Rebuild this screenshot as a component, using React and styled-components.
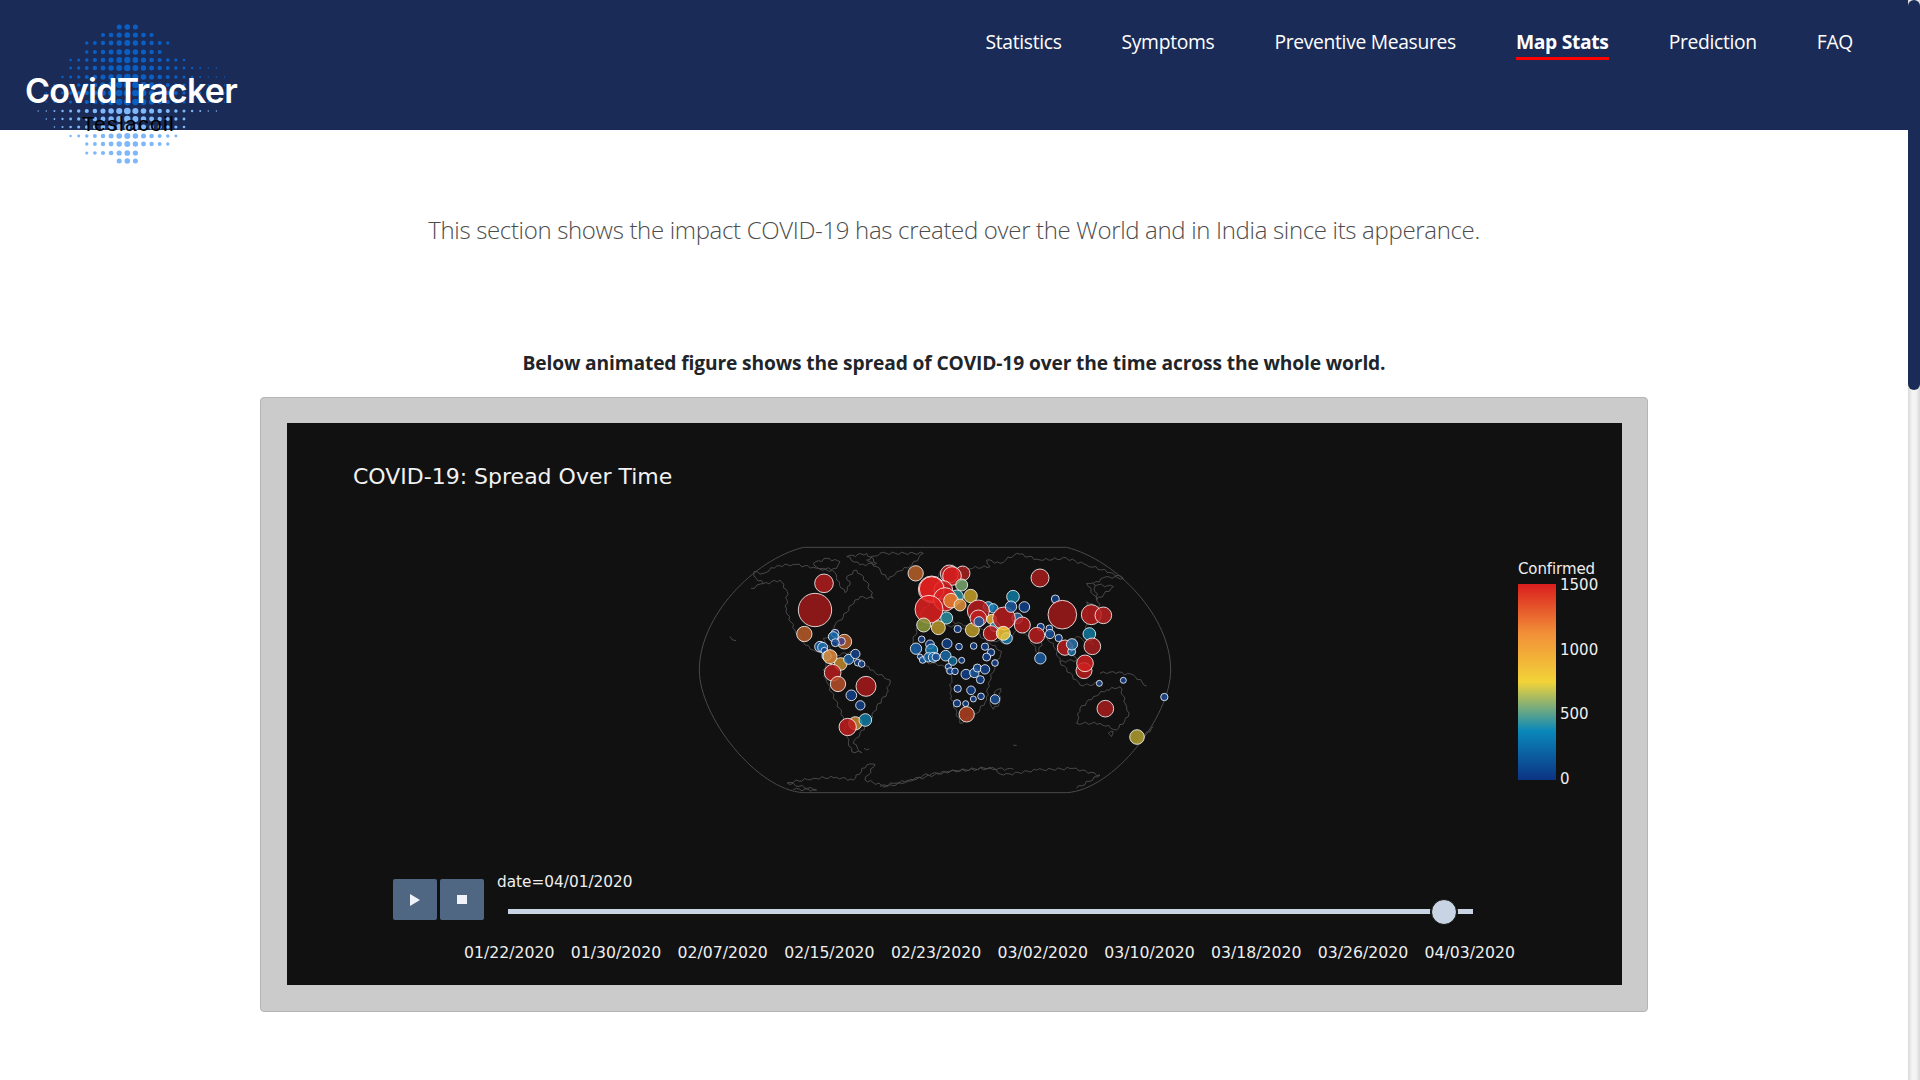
import * as React from "react";
import styled, { createGlobalStyle } from "styled-components";

const GlobalStyle = createGlobalStyle`
  html, body {
    margin: 0;
    padding: 0;
    height: 100%;
    overflow: hidden;
    background: #fff;
  }
`;

const Page = styled.div`
  display: flex;
  width: 1920px;
  height: 1080px;
  overflow: hidden;
`;

const Main = styled.main`
  flex: 1;
  min-width: 0;
  font-family: "Open Sans", sans-serif;
`;

const ScrollRail = styled.div`
  width: 12px;
  background: linear-gradient(to right, #d8d8d8, #f4f4f4 35%, #f4f4f4 65%, #d8d8d8);
`;

const ScrollThumb = styled.div`
  height: 390px;
  background: #1a2b58;
  border-radius: 6px;
`;

const Header = styled.header`
  display: flex;
  justify-content: space-between;
  align-items: flex-start;
  height: 130px;
  padding-right: 55px;
  background: #1a2b58;
`;

const Logo = styled.div`
  position: relative;
  width: 300px;
  height: 130px;
  padding: 69px 0 0 25px;
  box-sizing: border-box;
`;

const LogoDots = styled.svg`
  position: absolute;
  left: 0;
  top: 0;
`;

const LogoName = styled.div`
  position: relative;
  font-family: Inter, sans-serif;
  font-size: 34px;
  font-weight: 600;
  line-height: 44px;
  letter-spacing: -0.7px;
  color: #fff;
`;

const LogoTag = styled.div`
  position: absolute;
  left: 82px;
  top: 112px;
  font-family: "Liberation Sans", sans-serif;
  font-size: 21px;
  line-height: 24px;
  letter-spacing: 1.4px;
  color: #000;
`;

const Nav = styled.nav`
  display: flex;
  gap: 60px;
  padding-top: 27px;
`;

const NavLink = styled.a`
  display: block;
  height: 30px;
  font-size: 19.3px;
  line-height: 29px;
  letter-spacing: -0.32px;
  color: #fff;
  font-weight: ${({ $active }) => ($active ? 700 : 400)};
  border-bottom: 3px solid ${({ $active }) => ($active ? "#f00" : "transparent")};
`;

const Intro = styled.p`
  margin: 83px 0 102px;
  text-align: center;
  font-size: 24px;
  font-weight: 300;
  line-height: 34px;
  letter-spacing: -0.33px;
  color: #4d4d4d;
`;

const Caption = styled.h2`
  margin: 0 0 20px;
  text-align: center;
  font-size: 19.2px;
  font-weight: 700;
  line-height: 28px;
  letter-spacing: -0.13px;
  color: #212529;
`;

const FigureCard = styled.div`
  width: 1388px;
  height: 615px;
  margin: 0 auto;
  padding: 25px 25px 25px 26px;
  box-sizing: border-box;
  background: #cbcbcb;
  border: 1px solid #b5b5b5;
  border-radius: 4px;
`;

const Plot = styled.div`
  display: flex;
  flex-direction: column;
  width: 1335px;
  height: 562px;
  background: #111;
  color: #eee;
  font-family: "DejaVu Sans", sans-serif;
`;

const PlotTitle = styled.div`
  height: 107px;
  padding: 38px 0 0 66px;
  box-sizing: border-box;
  font-size: 22px;
  line-height: 32px;
  color: #f2f2f2;
`;

const PlotBody = styled.div`
  display: flex;
  align-items: flex-start;
  height: 349px;
`;

const MapSvg = styled.svg`
  flex: none;
  margin-left: 393px;
`;

const ColorBar = styled.div`
  margin: 31px 0 0 318px;
`;

const ColorBarTitle = styled.div`
  font-size: 15px;
  line-height: 16px;
  margin-bottom: 7px;
  letter-spacing: -0.1px;
`;

const ColorBarBody = styled.div`
  display: flex;
  gap: 4px;
`;

const ColorBarRamp = styled.div`
  width: 38px;
  height: 196px;
  background: linear-gradient(to top, #0c3383, #0a88ba 25%, #f2d338 50%, #f28f38 75%, #d91e1e);
`;

const ColorBarTicks = styled.div`
  display: flex;
  flex-direction: column;
  justify-content: space-between;
  height: 210px;
  margin-top: -7px;
  font-size: 15px;
  line-height: 16px;
`;

const Controls = styled.div`
  display: flex;
  align-items: flex-start;
  padding-left: 106px;
`;

const PlayButton = styled.div`
  display: flex;
  align-items: center;
  justify-content: center;
  width: 44px;
  height: 41px;
  margin-right: 3px;
  background: #506784;
  border-radius: 2px;
`;

const SliderColumn = styled.div`
  margin: -7px 0 0 10px;
`;

const SliderLabel = styled.div`
  font-size: 15.3px;
  line-height: 20px;
`;

const SliderRail = styled.div`
  position: relative;
  width: 965px;
  height: 5px;
  margin: 17px 0 0 11px;
  background: #c8d4e3;
`;

const SliderHandle = styled.div`
  position: absolute;
  top: 50%;
  width: 24px;
  height: 24px;
  transform: translate(-50%, -50%);
  background: #c8d4e3;
  border: 1px solid #111;
  box-shadow: 0 0 0 1px #111;
  border-radius: 50%;
`;

const SliderTicks = styled.div`
  display: flex;
  justify-content: space-between;
  width: 1051px;
  margin: 23px 0 0 177px;
  font-size: 15.7px;
  line-height: 20px;
`;

const N = "#123f8a";

// bubbles west of the Atlantic: x, y, r, fill (in 3x map units)
const bubblesWest = [
  [432, 160, 28, "#b01c1c"], [405, 240, 50, "#a01a1a"], [373, 312, 23, "#b85c28"],
  [465, 310, 12, N], [460, 320, 15, "#1a6aa8"], [493, 335, 22, "#b8602a"],
  [484, 334, 12, "#4a3f8a"], [466, 338, 12, "#174a96"], [420, 350, 16, "#1a5aa0"],
  [428, 352, 15, "#1c6cac"], [433, 362, 10, N], [440, 378, 14, "#0f7aa8"],
  [482, 402, 19, "#c08a2c"], [450, 380, 21, "#e08a38"], [506, 388, 15, "#1a62a5"],
  [526, 372, 14, N], [533, 398, 10, N], [545, 402, 10, N],
  [458, 428, 25, "#b81c1c"], [474, 462, 23, "#b8502a"], [558, 469, 30, "#a81a1a"],
  [514, 496, 16, N], [541, 526, 14, N], [526, 580, 20, "#c88a30"],
  [556, 570, 19, "#0f7aa0"], [503, 591, 26, "#c01c1c"],
];

// bubbles east of it, measured from a map origin 600 units further right
const bubblesEast = [
  [107, 130, 23, "#b8602a"], [248, 130, 22, "#a82020"], [208, 132, 27, "#b81c1c"],
  [216, 138, 28, "#d82020"], [245, 165, 18, "#7aa870"], [155, 178, 40, "#c81c1c"],
  [190, 180, 28, "#d02020"], [155, 177, 37, "#e02020"], [230, 200, 20, "#2a8ea0"],
  [272, 198, 20, "#c8a028"], [195, 208, 35, "#d82020"], [213, 212, 22, "#e08030"],
  [240, 225, 18, "#e0903a"], [147, 238, 42, "#e02020"], [200, 264, 18, "#2a8ea0"],
  [131, 285, 21, "#8a9a3c"], [175, 293, 21, "#b8962a"], [233, 297, 11, N],
  [277, 300, 21, "#b89a28"], [325, 230, 15, "#1a7ab0"], [340, 235, 14, "#1a7ab0"],
  [295, 243, 33, "#b81c1c"], [295, 265, 25, "#c02020"], [297, 275, 15, "#1a5aa0"],
  [335, 268, 15, "#e8b030"], [345, 290, 15, "#20809a"], [333, 310, 23, "#c01c1c"],
  [412, 265, 16, "#2a6aa0"], [372, 265, 34, "#b81c1c"], [380, 325, 17, "#1a7aa8"],
  [370, 310, 21, "#f2c838"], [399, 200, 19, "#0f7aa0"], [393, 230, 17, "#1a5aa0"],
  [433, 231, 16, N], [427, 285, 24, "#b81c1c"], [480, 144, 27, "#a81c1c"],
  [526, 207, 12, N], [547, 254, 43, "#a01a1a"], [634, 254, 30, "#b81c1c"],
  [670, 256, 25, "#b82020"], [628, 312, 19, "#0f7aa0"], [637, 349, 25, "#a81c1c"],
  [555, 353, 23, "#b81c1c"], [575, 365, 12, "#1a6aa0"], [576, 343, 17, "#2a70a8"],
  [482, 291, 11, N], [508, 295, 10, N], [510, 312, 14, "#1a5098"],
  [536, 324, 11, N], [470, 316, 24, "#b81c1c"], [481, 385, 17, "#1a5aa0"],
  [612, 422, 24, "#b81c1c"], [615, 400, 25, "#d02020"], [658, 460, 9, "#1d4a90"],
  [730, 451, 9, N], [853, 501, 11, "#1d4a90"], [676, 536, 25, "#a81c1c"],
  [771, 621, 22, "#b0a030"], [125, 328, 10, N], [150, 343, 13, N],
  [201, 341, 15, N], [237, 350, 10, N], [281, 348, 10, N],
  [315, 350, 11, N], [108, 356, 17, "#1a62a8"], [155, 360, 18, "#1a7ab0"],
  [120, 380, 8, N], [128, 390, 10, "#1a5aa0"], [145, 382, 14, "#1a6aa8"],
  [160, 382, 15, "#1a6aa8"], [168, 381, 12, "#1a5098"], [197, 377, 16, "#1a6aa8"],
  [218, 393, 13, "#106a9a"], [245, 391, 9, N], [333, 367, 11, N],
  [320, 381, 12, N], [345, 399, 10, N], [205, 410, 9, N],
  [210, 423, 10, N], [225, 424, 10, N], [258, 433, 15, N],
  [283, 429, 14, "#1a5aa0"], [292, 414, 12, "#1a5098"], [315, 418, 14, N],
  [301, 449, 12, N], [233, 476, 11, N], [273, 481, 13, N],
  [303, 499, 10, N], [280, 507, 9, N], [345, 508, 14, "#1a5098"],
  [231, 520, 11, N], [257, 521, 9, N], [260, 553, 23, "#b04020"],
];

const coastsWest = [
  [[213, 175], [250, 160], [228, 145], [222, 125], [250, 130], [290, 108], [340, 103], [400, 112], [430, 115], [465, 128], [470, 150], [495, 188], [510, 165], [500, 140], [530, 120], [560, 155], [580, 205], [540, 200], [515, 225], [490, 260], [465, 285], [462, 305], [445, 322], [430, 325], [440, 345], [470, 375], [445, 385], [410, 365], [375, 345], [345, 300], [318, 245], [322, 185], [300, 150], [250, 162]],
  [[445, 385], [470, 375], [520, 365], [570, 420], [630, 450], [620, 490], [590, 530], [570, 570], [540, 610], [520, 640], [545, 668], [515, 665], [500, 620], [490, 560], [440, 455], [430, 420], [445, 385]],
  [[625, 150], [590, 110], [560, 90], [600, 70], [730, 70], [690, 110], [650, 125], [625, 150]],
  [[400, 100], [440, 85], [480, 95], [470, 115], [420, 118], [400, 100]],
  [[500, 80], [560, 70], [590, 100], [540, 105], [500, 80]],
  [[150, 320], [168, 332]],
  [[322, 758], [400, 745], [470, 742], [520, 750], [560, 705], [585, 703], [555, 750], [620, 770], [700, 750], [800, 725], [930, 715], [1000, 718]],
  [[322, 760], [410, 780], [340, 778]],
  [[552, 655], [568, 657]],
];

const coastsEast = [
  [[100, 330], [115, 290], [180, 285], [240, 290], [290, 310], [330, 340], [365, 365], [345, 410], [325, 460], [320, 510], [290, 550], [240, 580], [210, 490], [215, 440], [185, 405], [130, 395], [105, 360], [100, 330]],
  [[350, 480], [362, 475], [358, 520], [340, 538], [330, 520], [350, 480]],
  [[120, 250], [165, 205], [150, 165], [200, 105], [260, 115], [330, 110], [320, 90], [360, 100], [410, 70], [480, 90], [560, 85], [620, 105], [700, 130], [730, 145], [680, 140], [640, 160], [650, 200], [660, 240], [620, 215], [620, 300], [640, 345], [590, 320], [575, 360], [590, 390], [540, 395], [520, 340], [490, 320], [475, 370], [445, 320], [410, 300], [385, 340], [330, 330], [295, 280], [270, 290], [200, 270], [130, 270], [120, 250]],
  [[540, 395], [600, 465], [640, 465], [660, 450]],
  [[660, 430], [700, 425], [760, 435], [800, 468]],
  [[620, 160], [700, 170], [650, 210], [620, 160]],
  [[600, 535], [640, 500], [680, 480], [720, 470], [740, 530], [745, 560], [710, 600], [660, 580], [590, 580], [600, 535]],
  [[685, 610], [700, 605], [695, 620], [685, 610]],
  [[770, 640], [820, 590]],
  [[400, 645], [410, 647]],
  [[0, 770], [40, 760], [100, 750], [130, 735], [230, 722], [330, 712], [370, 735], [470, 720], [580, 715], [660, 735], [590, 775]],
];

// break each straight run into short wobbling ones so it reads as a coast
function coastPath(points) {
  let d = `M${points[0][0]},${points[0][1]}`;
  for (let i = 1; i < points.length; i++) {
    const [ax, ay] = points[i - 1];
    const [bx, by] = points[i];
    const len = Math.hypot(bx - ax, by - ay);
    const steps = Math.max(1, Math.round(len / 9));
    for (let s = 1; s <= steps; s++) {
      const t = s / steps;
      const wobble = s === steps ? 0 : Math.sin(ax * 0.7 + ay * 1.3 + s * 2.1) * 4;
      const x = ax + (bx - ax) * t + (-(by - ay) / (len || 1)) * wobble;
      const y = ay + (by - ay) * t + ((bx - ax) / (len || 1)) * wobble;
      d += `L${x.toFixed(1)},${y.toFixed(1)}`;
    }
  }
  return d;
}

function Bubbles({ items }) {
  return items.map(([x, y, r, fill]) => (
    <circle
      key={`${x}-${y}-${r}`}
      cx={x}
      cy={y}
      r={r}
      fill={fill}
      fillOpacity="0.85"
      stroke="#fff"
      strokeOpacity="0.8"
      strokeWidth="3"
    />
  ));
}

function WorldMap() {
  return (
    <MapSvg width="520" height="280" viewBox="0 0 1560 840">
      <path
        d="M370,52 L1160,52 C1310,90 1472,260 1472,420 C1472,560 1300,780 1160,788 L370,788 C230,780 58,560 58,420 C58,260 220,90 370,52 Z"
        fill="none"
        stroke="#4a4a4a"
        strokeWidth="3"
      />
      <g fill="none" stroke="#4a4a4a" strokeWidth="3">
        {coastsWest.map((c, i) => (
          <path key={i} d={coastPath(c)} />
        ))}
        <g transform="translate(600 0)">
          {coastsEast.map((c, i) => (
            <path key={i} d={coastPath(c)} />
          ))}
        </g>
      </g>
      <Bubbles items={bubblesWest} />
      <g transform="translate(600 0)">
        <Bubbles items={bubblesEast} />
      </g>
    </MapSvg>
  );
}

// y row, first and last column of the halftone diamond
const dotRows = [
  [27, -1, 1], [35, -3, 3], [43, -5, 5], [52, -5, 4], [60, -7, 7], [68, -7, 11],
  [77, -8, 12], [85, -10, 12], [93, -10, 12], [102, -10, 12], [111, -11, 11],
  [119, -10, 7], [127, -9, 7], [136, -7, 6], [144, -5, 5], [153, -5, 1], [161, -1, 1],
];

function LogoHalftone() {
  const dots = [];
  dotRows.forEach(([y, from, to], row) => {
    for (let k = from; k <= to; k++) {
      const r = 3.5 - 0.26 * Math.abs(k) - 0.09 * Math.abs(row - 8);
      dots.push(
        <circle
          key={`${row}-${k}`}
          cx={127.3 + k * 8.1}
          cy={y}
          r={Math.max(0.7, r)}
          fill={y >= 111 ? "#7fb8fa" : "#0a5fc4"}
        />
      );
    }
  });
  return (
    <LogoDots width="300" height="170" viewBox="0 0 300 170">
      {dots}
    </LogoDots>
  );
}

const navItems = ["Statistics", "Symptoms", "Preventive Measures", "Map Stats", "Prediction", "FAQ"];
const sliderDates = [
  "01/22/2020", "01/30/2020", "02/07/2020", "02/15/2020", "02/23/2020",
  "03/02/2020", "03/10/2020", "03/18/2020", "03/26/2020", "04/03/2020",
];

export default function App() {
  return (
    <Page>
      <GlobalStyle />
      <Main>
        <Header>
          <Logo>
            <LogoHalftone />
            <LogoName>CovidTracker</LogoName>
            <LogoTag>Teslacoil</LogoTag>
          </Logo>
          <Nav>
            {navItems.map((item) => (
              <NavLink key={item} $active={item === "Map Stats"}>
                {item}
              </NavLink>
            ))}
          </Nav>
        </Header>
        <Intro>
          This section shows the impact COVID-19 has created over the World and in India since its apperance.
        </Intro>
        <Caption>Below animated figure shows the spread of COVID-19 over the time across the whole world.</Caption>
        <FigureCard>
          <Plot>
            <PlotTitle>COVID-19: Spread Over Time</PlotTitle>
            <PlotBody>
              <WorldMap />
              <ColorBar>
                <ColorBarTitle>Confirmed</ColorBarTitle>
                <ColorBarBody>
                  <ColorBarRamp />
                  <ColorBarTicks>
                    <span>1500</span>
                    <span>1000</span>
                    <span>500</span>
                    <span>0</span>
                  </ColorBarTicks>
                </ColorBarBody>
              </ColorBar>
            </PlotBody>
            <Controls>
              <PlayButton>
                <svg width="12" height="14" viewBox="0 0 12 14">
                  <path d="M1,1 L11,7 L1,13 Z" fill="#f0f4fa" />
                </svg>
              </PlayButton>
              <PlayButton>
                <svg width="10" height="10" viewBox="0 0 10 10">
                  <rect width="10" height="9" fill="#f0f4fa" />
                </svg>
              </PlayButton>
              <SliderColumn>
                <SliderLabel>date=04/01/2020</SliderLabel>
                <SliderRail>
                  <SliderHandle style={{ left: "97%" }} />
                </SliderRail>
              </SliderColumn>
            </Controls>
            <SliderTicks>
              {sliderDates.map((date) => (
                <span key={date}>{date}</span>
              ))}
            </SliderTicks>
          </Plot>
        </FigureCard>
      </Main>
      <ScrollRail>
        <ScrollThumb />
      </ScrollRail>
    </Page>
  );
}
